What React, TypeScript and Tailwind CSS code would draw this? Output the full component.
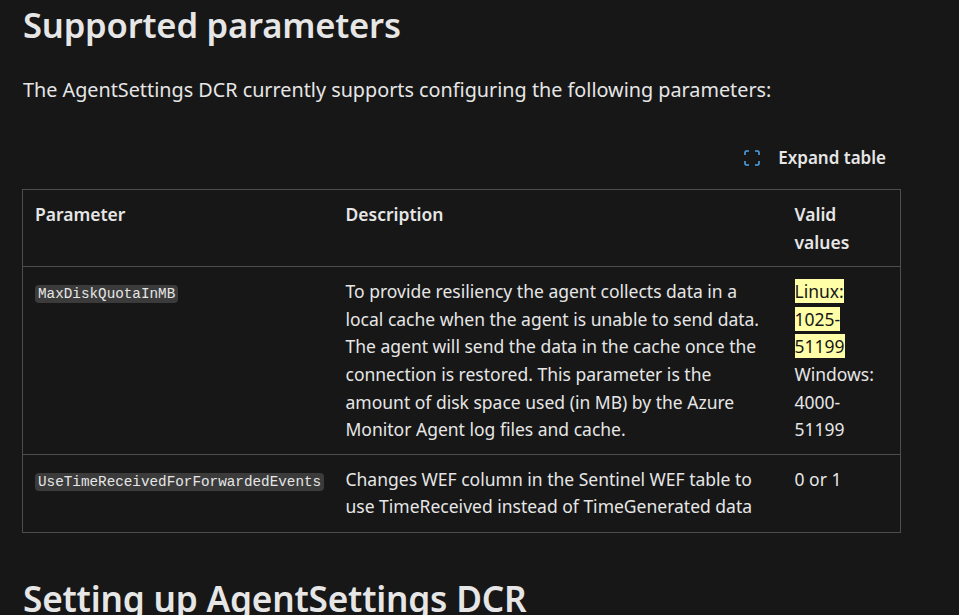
// Docs page fragment: "Supported parameters" table

const font = "font-['Segoe_UI','Noto_Sans',sans-serif]";

const Code = ({ children }: { children: string }) => (
    <code className="rounded-[4px] bg-[#3b3b3b] px-[3px] py-[1px] font-['Liberation_Mono',monospace] text-[14.3px] text-[#e6e6e6]">
        {children}
    </code>
);

export default function App() {
    return (
        <div className={`min-h-screen w-full bg-[#171717] text-[#e6e6e6] ${font} overflow-hidden`}>
            <div className="pl-[23px] pr-[58px] pt-[3px]">
                <h2 className="text-[34.6px] font-semibold leading-[44px] tracking-[-0.2px]">Supported parameters</h2>

                <p className="mt-[28px] text-[19.8px] leading-[30px]">
                    The AgentSettings DCR currently supports configuring the following parameters:
                </p>

                <div className="mt-[41px] flex justify-end pr-[15px]">
                    <button className="flex items-center gap-[18px] text-[17px] font-semibold leading-[24px] text-[#e6e6e6]">
                        <svg width="16" height="16" viewBox="0 0 16 16" fill="none" stroke="#4ea1e6" strokeWidth="1.6">
                            <path d="M1 5V2.5Q1 1 2.5 1H5" />
                            <path d="M11 1h2.5Q15 1 15 2.5V5" />
                            <path d="M15 11v2.5Q15 15 13.5 15H11" />
                            <path d="M5 15H2.5Q1 15 1 13.5V11" />
                        </svg>
                        Expand table
                    </button>
                </div>

                <table className="mt-[19px] ml-[-1px] w-[879px] table-fixed border-collapse border border-[#4d4d4d] text-left text-[17.5px] leading-[27.6px]">
                    <thead>
                        <tr className="border-b border-[#4d4d4d]">
                            <th className="w-[311px] px-3 pt-[11px] pb-[10px] align-top font-semibold">Parameter</th>
                            <th className="w-[449px] px-3 pt-[11px] pb-[10px] align-top font-semibold">Description</th>
                            <th className="px-3 pt-[11px] pb-[10px] align-top font-semibold">Valid values</th>
                        </tr>
                    </thead>
                    <tbody>
                        <tr className="border-b border-[#4d4d4d]">
                            <td className="px-3 pt-[11px] pb-[10px] align-top">
                                <Code>MaxDiskQuotaInMB</Code>
                            </td>
                            <td className="px-3 pt-[11px] pb-[10px] align-top">
                                To provide resiliency the agent collects data in a local cache when the agent is unable to
                                send data. The agent will send the data in the cache once the connection is restored. This
                                parameter is the amount of disk space used (in MB) by the Azure Monitor Agent log files and
                                cache.
                            </td>
                            <td className="px-3 pt-[11px] pb-[10px] align-top">
                                <mark className="bg-[#ffffa8] text-[#171717]">Linux: 1025-51199</mark>
                                <br />
                                Windows: 4000-51199
                            </td>
                        </tr>
                        <tr>
                            <td className="px-3 pt-[11px] pb-[10px] align-top">
                                <Code>UseTimeReceivedForForwardedEvents</Code>
                            </td>
                            <td className="px-3 pt-[11px] pb-[11px] align-top">
                                Changes WEF column in the Sentinel WEF table to use TimeReceived instead of TimeGenerated data
                            </td>
                            <td className="px-3 pt-[11px] pb-[10px] align-top">0 or 1</td>
                        </tr>
                    </tbody>
                </table>

                <h2 className="mt-[43px] text-[35.2px] font-semibold leading-[44px] tracking-[-0.2px]">Setting up AgentSettings DCR</h2>
            </div>
        </div>
    );
}
